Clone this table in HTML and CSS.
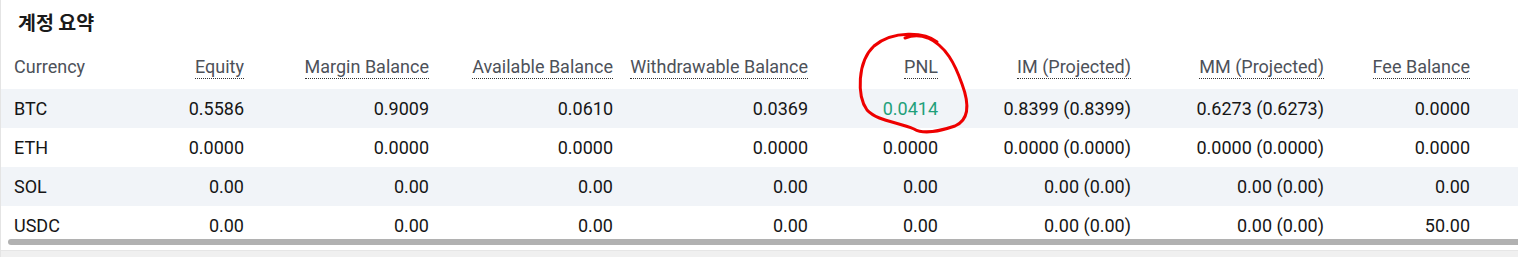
FILE: index.html
```html
<!DOCTYPE html>
<html>
<head>
    <title>계정 요약</title>
    <link rel="stylesheet" href="styles.css">
</head>
<body>
    <div class="panel">
        <h2 class="panel-title">계정 요약</h2>
        <div class="table-wrap">
            <table class="summary">
                <thead>
                    <tr>
                        <th class="left c-cur">Currency</th>
                        <th class="c-eq"><span class="tip">Equity</span></th>
                        <th class="c-mb"><span class="tip">Margin Balance</span></th>
                        <th class="c-ab"><span class="tip">Available Balance</span></th>
                        <th class="c-wb"><span class="tip">Withdrawable Balance</span></th>
                        <th class="c-pnl"><span class="tip">PNL</span></th>
                        <th class="c-im"><span class="tip">IM (Projected)</span></th>
                        <th class="c-mm"><span class="tip">MM (Projected)</span></th>
                        <th class="c-fee"><span class="tip">Fee Balance</span></th>
                        <th class="c-more"></th>
                    </tr>
                </thead>
                <tbody>
                    <tr>
                        <td class="left">BTC</td>
                        <td>0.5586</td><td>0.9009</td><td>0.0610</td><td>0.0369</td>
                        <td class="up">0.0414</td>
                        <td>0.8399 (0.8399)</td><td>0.6273 (0.6273)</td><td>0.0000</td><td></td>
                    </tr>
                    <tr>
                        <td class="left">ETH</td>
                        <td>0.0000</td><td>0.0000</td><td>0.0000</td><td>0.0000</td>
                        <td>0.0000</td>
                        <td>0.0000 (0.0000)</td><td>0.0000 (0.0000)</td><td>0.0000</td><td></td>
                    </tr>
                    <tr>
                        <td class="left">SOL</td>
                        <td>0.00</td><td>0.00</td><td>0.00</td><td>0.00</td>
                        <td>0.00</td>
                        <td>0.00 (0.00)</td><td>0.00 (0.00)</td><td>0.00</td><td></td>
                    </tr>
                    <tr>
                        <td class="left">USDC</td>
                        <td>0.00</td><td>0.00</td><td>0.00</td><td>0.00</td>
                        <td>0.00</td>
                        <td>0.00 (0.00)</td><td>0.00 (0.00)</td><td>50.00</td><td></td>
                    </tr>
                </tbody>
            </table>
            <div class="scroll-thumb"></div>
        </div>
        <div class="panel-foot"></div>
    </div>

    <!-- hand-drawn annotation round the PNL cell -->
    <svg class="mark" width="1518" height="257" viewBox="0 0 1518 257">
        <path d="M937 42 C925 32 893 30 874 46 C857 62 857 96 867 110 C877 121 898 122 914 129 C924 135 940 131 955 126 C971 119 968 100 962 84 C955 64 946 46 928 38 C918 34 910 36 905 38" fill="none" stroke="#ee0000" stroke-width="3" stroke-linecap="round" stroke-linejoin="round"/>
    </svg>
</body>
</html>
```

FILE: styles.css
```css
body {
    margin: 0;
    overflow: hidden;
    background: #fff;
    font-family: Roboto, "Liberation Sans", sans-serif;
    position: relative;
}
.panel {
    border-left: 1px solid #e4e4e4;
    width: 1700px;
}
.panel-title {
    margin: 0;
    padding: 9px 0 0 17px;
    height: 34px;
    box-sizing: border-box;
    font-family: "Noto Sans CJK KR", Roboto, sans-serif;
    font-size: 19.5px;
    line-height: 26px;
    font-weight: 700;
    color: #1a1a1a;
}
.table-wrap {
    position: relative;
}
.summary {
    border-collapse: collapse;
    table-layout: fixed;
    width: 1699px;
    font-size: 18px;
}
.c-cur { width: 129px; }
.c-eq { width: 122px; }
.c-mb { width: 185px; }
.c-ab { width: 184px; }
.c-wb { width: 195px; }
.c-pnl { width: 130px; }
.c-im { width: 193px; }
.c-mm { width: 193px; }
.c-fee { width: 146px; }
.c-more { width: 222px; }
.summary th {
    height: 55px;
    padding: 10px 8px 0 8px;
    box-sizing: border-box;
    text-align: right;
    font-weight: 400;
    color: #4d5159;
    white-space: nowrap;
}
.summary td {
    height: 39px;
    padding: 0 8px;
    text-align: right;
    color: #161616;
    white-space: nowrap;
}
.summary .left {
    text-align: left;
    padding-left: 13px;
}
.summary tbody tr:nth-child(odd) td {
    background: #f1f4f8;
}
.tip {
    border-bottom: 1px dotted #333;
    padding-bottom: 1px;
}
.up {
    color: #1fa07a !important;
}
.scroll-thumb {
    position: absolute;
    left: 7px;
    right: 0;
    bottom: 0;
    height: 6px;
    border-radius: 3px;
    background: #b1b1b1;
}
.panel-foot {
    margin-top: 5px;
    height: 8px;
    border-top: 1px solid #e6e6e6;
    background: #f0f0f0;
}
.mark {
    position: absolute;
    left: 0;
    top: 0;
    pointer-events: none;
}
```
